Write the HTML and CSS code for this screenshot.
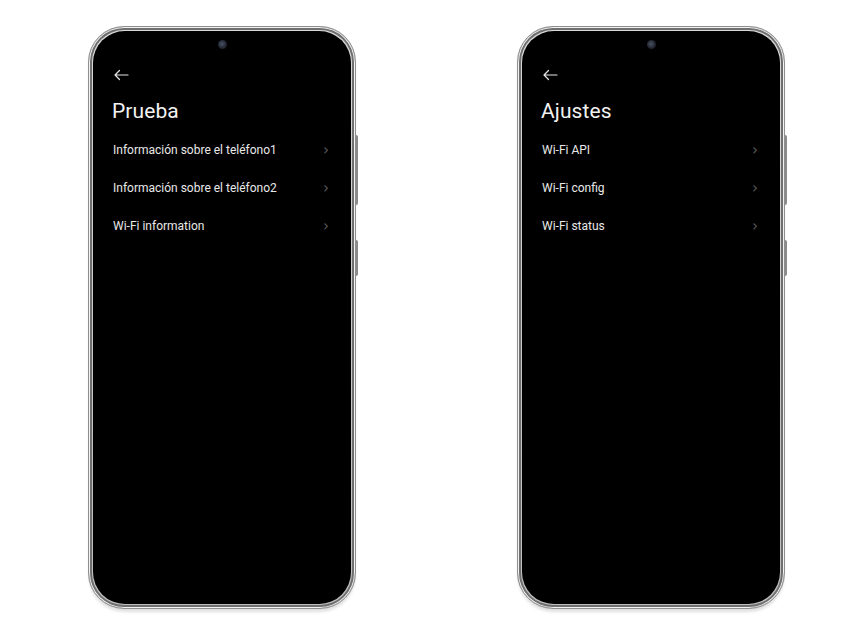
FILE: index.html
```html
<!DOCTYPE html>
<html lang="es">
<head>
<meta charset="utf-8">
<title>Prueba</title>
<link rel="stylesheet" href="styles.css">
</head>
<body>
<div class="stage">
  <div class="phone">
    <span class="btn btn-vol"></span>
    <span class="btn btn-power"></span>
    <div class="screen">
      <span class="camera"></span>
      <div class="back">
        <svg width="16" height="12" viewBox="0 0 16 12"><path d="M15 6H2M6.5 1.5L2 6l4.5 4.5" fill="none" stroke="#e6e6e6" stroke-width="1.2" stroke-linecap="round" stroke-linejoin="round"/></svg>
      </div>
      <h1 class="title">Prueba</h1>
      <ul class="list">
        <li class="row"><span>Información sobre el teléfono1</span><span class="chev">›</span></li>
        <li class="row"><span>Información sobre el teléfono2</span><span class="chev">›</span></li>
        <li class="row"><span>Wi-Fi information</span><span class="chev">›</span></li>
      </ul>
    </div>
  </div>
  <div class="phone">
    <span class="btn btn-vol"></span>
    <span class="btn btn-power"></span>
    <div class="screen">
      <span class="camera"></span>
      <div class="back">
        <svg width="16" height="12" viewBox="0 0 16 12"><path d="M15 6H2M6.5 1.5L2 6l4.5 4.5" fill="none" stroke="#e6e6e6" stroke-width="1.2" stroke-linecap="round" stroke-linejoin="round"/></svg>
      </div>
      <h1 class="title">Ajustes</h1>
      <ul class="list">
        <li class="row"><span>Wi-Fi API</span><span class="chev">›</span></li>
        <li class="row"><span>Wi-Fi config</span><span class="chev">›</span></li>
        <li class="row"><span>Wi-Fi status</span><span class="chev">›</span></li>
      </ul>
    </div>
  </div>
</div>
</body>
</html>
```

FILE: styles.css
```css
html, body {
  margin: 0;
  padding: 0;
  background: #ffffff;
  width: 854px;
  height: 640px;
  overflow: hidden;
  font-family: "Roboto", "Liberation Sans", sans-serif;
}
.stage {
  display: flex;
  gap: 161px;
  padding: 26px 0 0 88px;
}
.phone {
  position: relative;
  width: 268px;
  height: 583px;
  box-sizing: border-box;
  border-radius: 36px;
  padding: 4px;
  background: linear-gradient(#d8d8d8, #bdbdbd);
  border: 1px solid #8e8e8e;
  box-shadow: inset 0 0 0 1px #f2f2f2, inset 0 0 0 3px #6f6f6f, 0 4px 3px -1px rgba(0,0,0,0.12);
}
.btn {
  position: absolute;
  right: -3px;
  width: 2px;
  background: #8a8a8a;
  border-radius: 0 2px 2px 0;
}
.btn-vol { top: 108px; height: 70px; }
.btn-power { top: 213px; height: 36px; }
.screen {
  position: relative;
  height: 100%;
  box-sizing: border-box;
  background: #000;
  border-radius: 32px;
  padding: 38px 20px 0 16px;
  color: #f0f0f0;
}
.camera {
  position: absolute;
  top: 9px;
  left: 50%;
  margin-left: -4px;
  width: 9px;
  height: 9px;
  border-radius: 50%;
  background: radial-gradient(circle at 45% 45%, #4a5262 0, #232833 55%, #0c0d10 100%);
}
.back {
  height: 12px;
  margin-left: 4px;
  line-height: 0;
}
.title {
  margin: 18px 0 0 3px;
  font-size: 21px;
  font-weight: 400;
  line-height: 24px;
  color: #f2f2f2;
  letter-spacing: 0.1px;
}
.list {
  list-style: none;
  margin: 8px 0 0 0;
  padding: 0;
}
.row {
  display: flex;
  justify-content: space-between;
  align-items: center;
  height: 38px;
  padding-left: 4px;
  padding-right: 2px;
  font-size: 12px;
  color: #e8e8e8;
}
.chev {
  color: #5a5a5a;
  font-size: 15px;
  font-family: "DejaVu Sans", sans-serif;
}
```
